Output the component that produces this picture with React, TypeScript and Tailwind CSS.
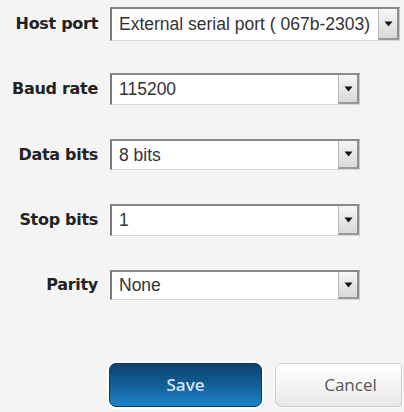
import React from "react";

type Field = { label: string; value: string; width: number; mt: number; h: number };

const fields: Field[] = [
  { label: "Host port", value: "External serial port ( 067b-2303)", width: 290, mt: 7, h: 34 },
  { label: "Baud rate", value: "115200", width: 250, mt: 32, h: 32 },
  { label: "Data bits", value: "8 bits", width: 250, mt: 34, h: 31 },
  { label: "Stop bits", value: "1", width: 250, mt: 34, h: 32 },
  { label: "Parity", value: "None", width: 250, mt: 34, h: 30 },
];

function Arrow() {
  return (
    <div className="flex h-full w-[21px] shrink-0 items-center justify-center border-l border-[#b9b9b9] border-r-2 border-b-2 border-r-[#8e8e8e] border-b-[#9a9a9a] bg-gradient-to-b from-[#f6f6f6] to-[#d9d9d9]">
      <svg width="9" height="6" viewBox="0 0 9 6">
        <polygon points="0.5,0.5 8.5,0.5 4.5,5.5" fill="#111" />
      </svg>
    </div>
  );
}

function SelectRow({ f }: { f: Field }) {
  return (
    <div className="flex items-center" style={{ marginTop: f.mt, height: f.h }}>
      <div className="w-[98px] shrink-0 text-right font-['DejaVu_Sans',sans-serif] text-[16px] font-bold tracking-[-0.3px] text-[#222]">
        {f.label}
      </div>
      <div
        className="ml-[12px] flex h-full items-stretch border-l-2 border-t-2 border-l-[#7a7a7a] border-t-[#8a8a8a] border-r border-b border-r-[#c8c8c8] border-b-[#d6d6d6] bg-white"
        style={{ width: f.width }}
      >
        <div className="flex flex-1 items-center overflow-hidden whitespace-nowrap pl-[7px] font-['Liberation_Sans',Arial,sans-serif] text-[17.5px] text-[#333]">
          {f.value}
        </div>
        <Arrow />
      </div>
    </div>
  );
}

export default function App() {
  return (
    <div className="h-[412px] w-[404px] overflow-hidden bg-[#f4f4f4]">
      <div className="flex flex-col">
        {fields.map((f) => (
          <SelectRow key={f.label} f={f} />
        ))}
      </div>
      <div className="mt-[63px] flex gap-[13px] pl-[109px]">
        <button className="flex h-[44px] w-[153px] items-center justify-center rounded-[7px] border border-[#0a3a66] bg-gradient-to-b from-[#0c426f] via-[#135f98] to-[#1d86c8] font-['Open_Sans',sans-serif] text-[17px] font-semibold text-[#cfe4f5] shadow-[0_0_0_2px_#ffffff]">
          Save
        </button>
        <button className="flex h-[44px] w-[127px] items-center justify-center rounded-l-[7px] rounded-r-[3px] border border-[#cdcdcd] bg-gradient-to-b from-white to-[#e9e9e9] pl-[24px] font-['Open_Sans',sans-serif] text-[17px] text-[#555] shadow-[0_0_0_1px_#f9f9f9]">
          Cancel
        </button>
      </div>
    </div>
  );
}
